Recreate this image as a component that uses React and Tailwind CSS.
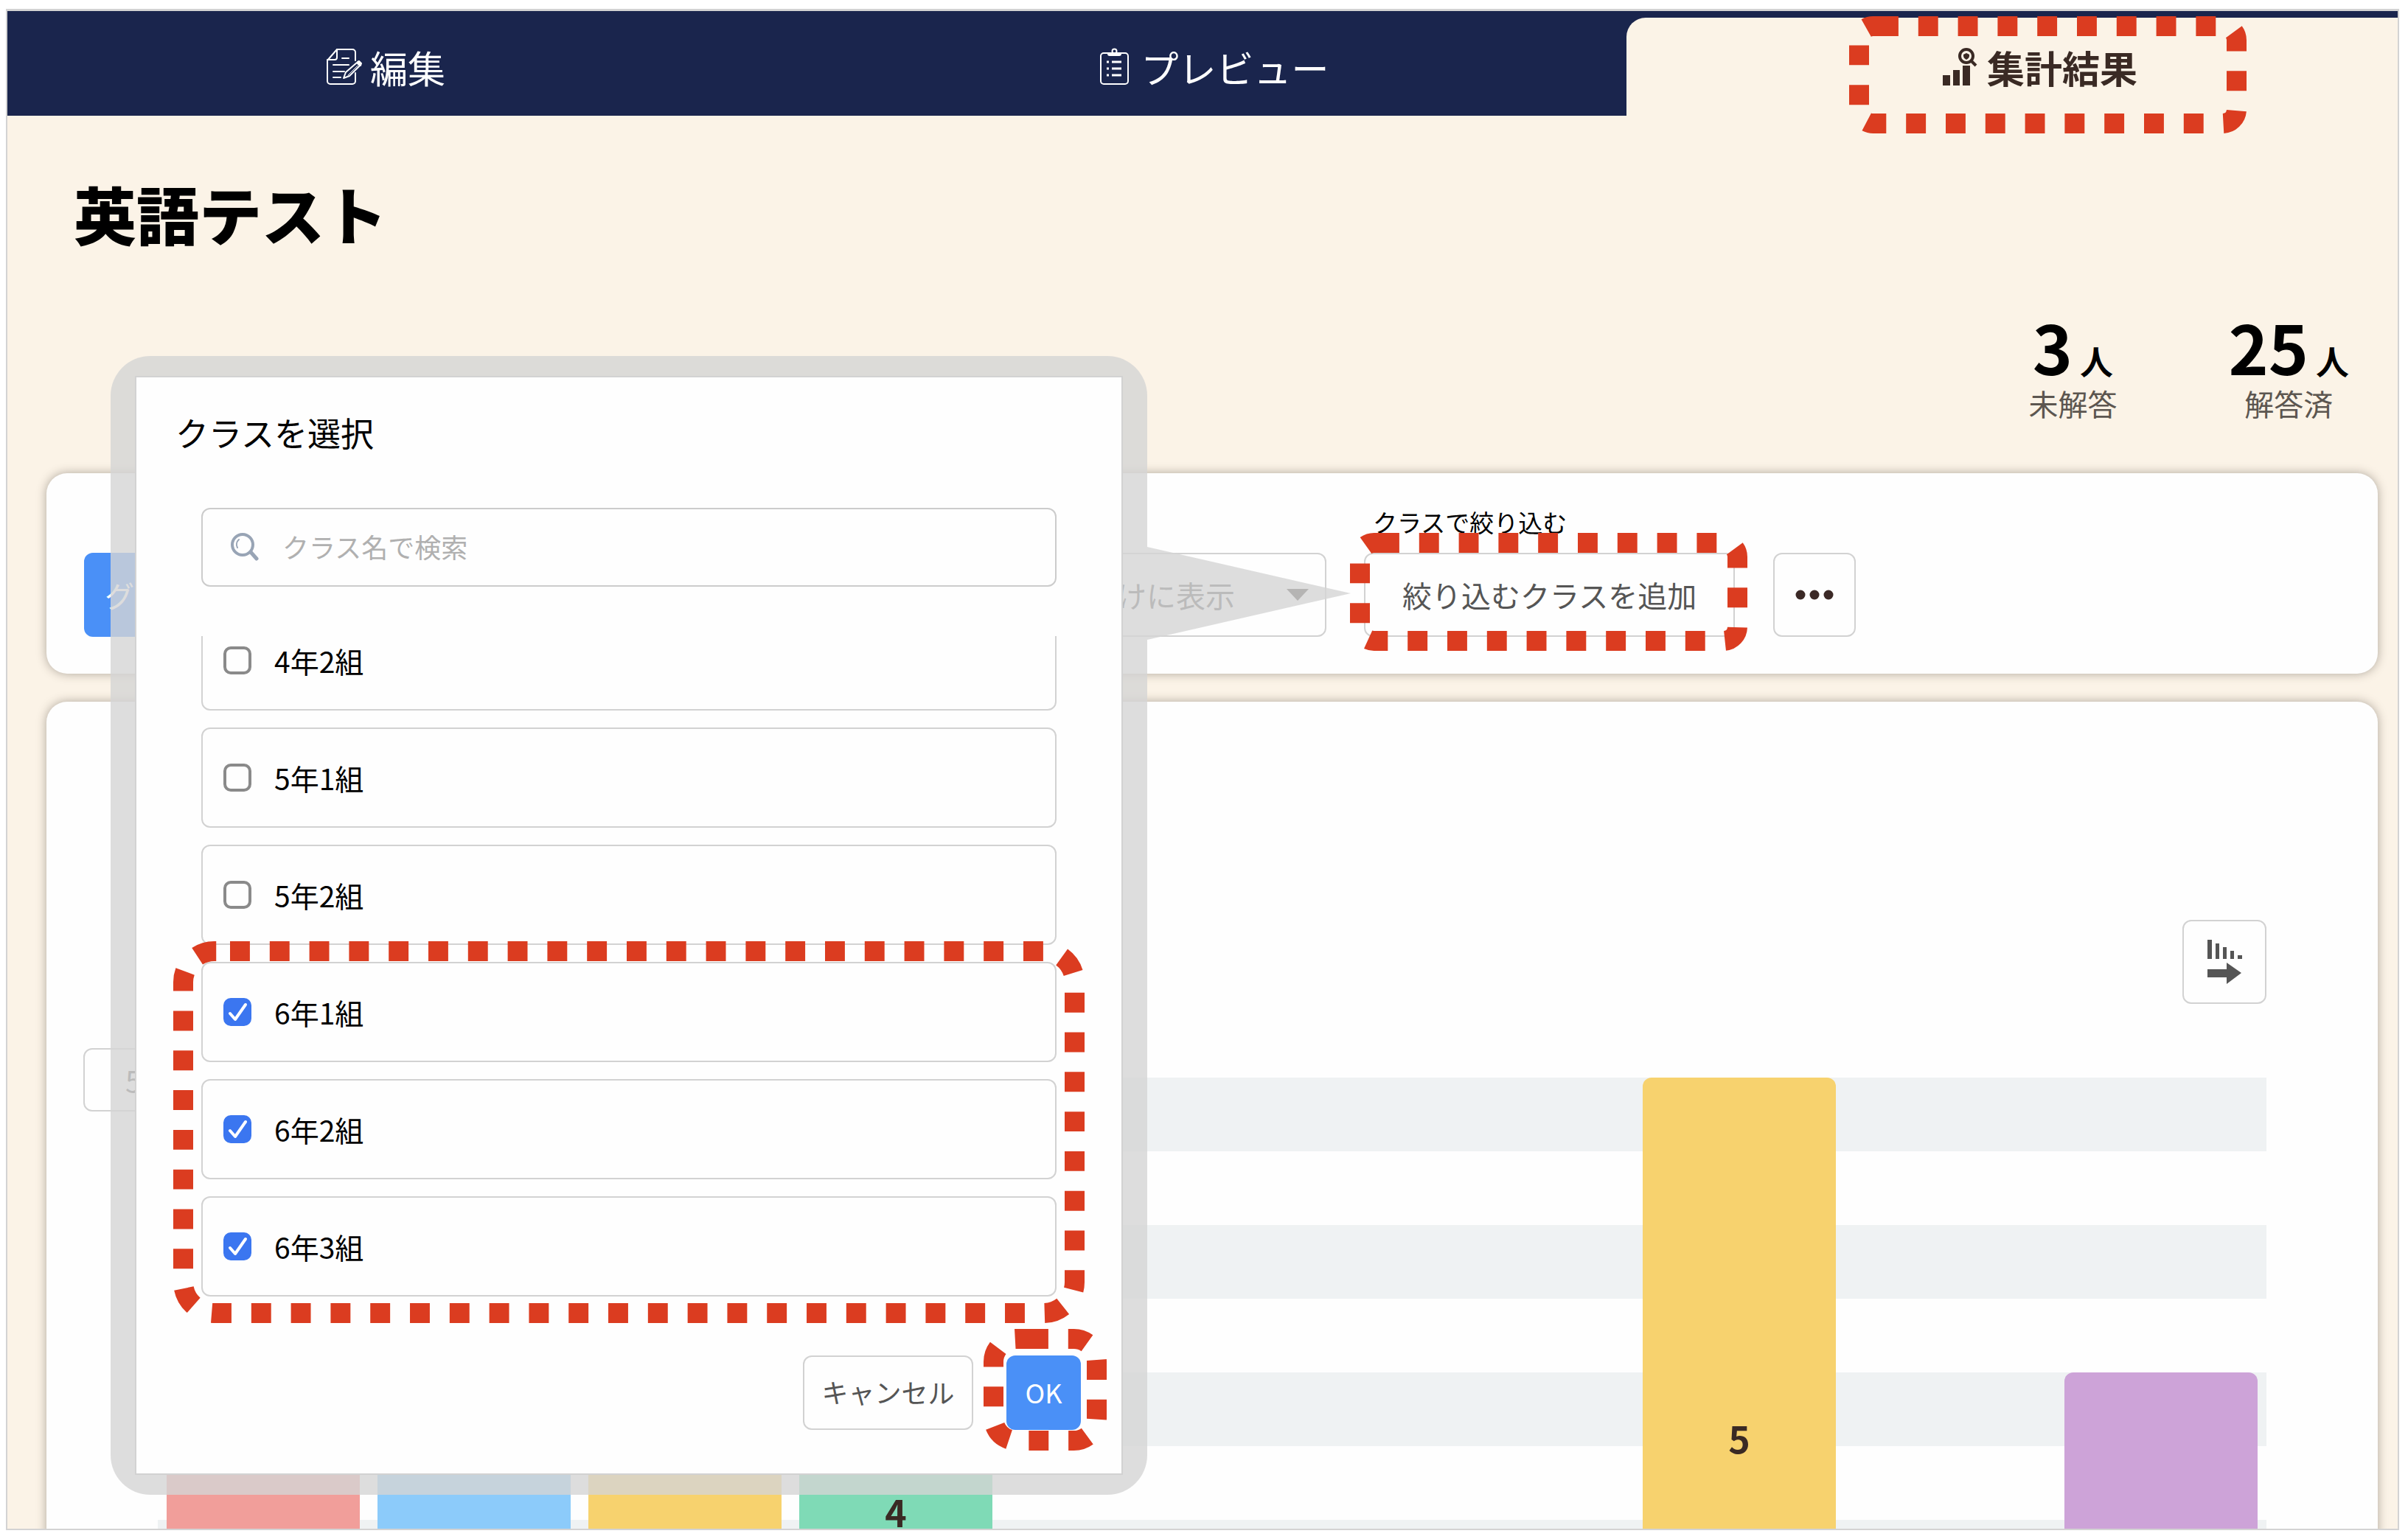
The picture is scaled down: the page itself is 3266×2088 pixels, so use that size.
import { useState } from 'react';

const TABS = [
  { id: 'edit', label: '編集', Icon: EditIcon },
  { id: 'preview', label: 'プレビュー', Icon: ClipboardIcon },
  { id: 'results', label: '集計結果', Icon: ResultsIcon },
];

const CLASSES = ['4年2組', '5年1組', '5年2組', '6年1組', '6年2組', '6年3組'];

const UNIT = 200;
const MIN_LABELLED = 4;
const BARS = [
  { value: 3, color: 'bg-[#f19e9a]' },
  { value: 3, color: 'bg-[#8ccbfa]' },
  { value: 3, color: 'bg-[#f7d26e]' },
  { value: 4, color: 'bg-[#7fdab6]' },
  { value: 0, color: 'bg-[#cda3d8]' },
  { value: 0, color: 'bg-[#f19e9a]' },
  { value: 0, color: 'bg-[#8ccbfa]' },
  { value: 5, color: 'bg-[#f7d26e]' },
  { value: 0, color: 'bg-[#7fdab6]' },
  { value: 3, color: 'bg-[#cda3d8]' },
];

function EditIcon() {
  return (
    <svg viewBox="0 0 49 51" className="w-[49px] h-[51px]" fill="none" stroke="currentColor" strokeWidth="2" strokeLinecap="round" strokeLinejoin="round">
      <path d="M40 17V6a4 4 0 0 0-4-4H15L2 17v28a4 4 0 0 0 4 4h30a4 4 0 0 0 4-4V34" />
      <path d="M15 2v11a3 3 0 0 1-3 3H2" />
      <path d="M22 14h9M10 23h21M10 32h15M10 40h10" />
      <path d="M24 41l3-8 15-13 4 4-14 14z" />
      <path d="M30 37l13-13" strokeWidth="1" />
      <path d="M43 19l2-1 3 3-1 3z" fill="currentColor" />
    </svg>
  );
}

function ClipboardIcon() {
  return (
    <svg viewBox="0 0 49 51" className="w-[49px] h-[51px]" fill="none" stroke="currentColor" strokeWidth="2">
      <rect x="6" y="7" width="37" height="42" rx="4" />
      <path d="M15 6h19v2a3 3 0 0 1-3 3H18a3 3 0 0 1-3-3z" fill="currentColor" stroke="none" />
      <circle cx="24.500" cy="4.500" r="3" />
      <path d="M14 19h3M14 28h3M14 37h3M21 19h13M21 28h13M21 37h13" strokeWidth="3" />
    </svg>
  );
}

function ResultsIcon() {
  return (
    <svg viewBox="0 0 49 51" className="w-[49px] h-[51px]" fill="currentColor">
      <path d="M0 37h10v14H0zM14 30h9v21h-9zM27 24h10v27H27z" />
      <circle cx="32" cy="11" r="9" fill="none" stroke="currentColor" strokeWidth="4" />
      <path d="M28 9l4-2 4 2v2c0 2-2 4-4 5-2-1-4-3-4-5z" />
      <path d="M38 17l7 7" stroke="currentColor" strokeWidth="4" />
    </svg>
  );
}

function SearchIcon() {
  return (
    <svg viewBox="0 0 38 38" className="w-[38px] h-[38px]" fill="none" stroke="currentColor" strokeLinecap="round">
      <circle cx="16" cy="16" r="14" strokeWidth="4" />
      <path d="M9 20a9 9 0 0 1 2-11" strokeWidth="2" />
      <path d="M27 26l8 9" strokeWidth="5" />
    </svg>
  );
}

function SortIcon() {
  return (
    <svg viewBox="0 0 47 60" className="w-[47px] h-[60px]" fill="currentColor">
      <path d="M0 0h6v26H0zM11 5h5v21h-5zM21 10h5v16h-5zM31 15h5v11h-5zM41 21h6v5h-6z" />
      <path d="M0 40h26V31l20 14-20 15V51H0z" />
    </svg>
  );
}

// Dashed marker drawn round a control. start = where the first dash begins on the top edge.
function Highlight({ width, height, radius, start, className }) {
  const m = 13.5;
  const r = radius;
  const R = width - m;
  const B = height - m;
  const d = `M${start} ${m}H${R - r}A${r} ${r} 0 0 1 ${R} ${m + r}V${B - r}A${r} ${r} 0 0 1 ${R - r} ${B}H${m + r}A${r} ${r} 0 0 1 ${m} ${B - r}V${m + r}A${r} ${r} 0 0 1 ${m + r} ${m}H${start}`;
  return (
    <svg width={width} height={height} aria-hidden="true" className={`absolute max-w-none pointer-events-none ${className}`}>
      <path d={d} fill="none" stroke="#db3c20" strokeWidth="27" strokeDasharray="26.9" />
    </svg>
  );
}

function Header() {
  return (
    <nav className="flex bg-[#1a254d] pt-[9px] -ml-[48px] -mr-[76px]">
      {TABS.map(({ id, label, Icon }) => (
        <button key={id} type="button"
          className={`flex-1 flex items-center justify-center h-[133px] text-[51px] leading-[66px] ${
            id === 'results' ? 'bg-[#fbf3e7] text-[#3a2a24] font-bold rounded-tl-[26px]' : 'text-white'
          }`}>
          <span className="relative flex items-center gap-[11px]">
            <Icon />
            {label}
            {id === 'results' && (
              <Highlight width={539} height={159} radius={19} start={40} className="-left-[127px] -top-9" />
            )}
          </span>
        </button>
      ))}
    </nav>
  );
}

function Stat({ count, label }) {
  return (
    <div className="flex flex-col items-center">
      <div className="flex items-baseline gap-2.5 text-black font-bold">
        <span className="text-[92px] leading-[100px]">{count}</span>
        <span className="text-[45px] leading-[45px]">人</span>
      </div>
      <div className="text-[40px] leading-[56px] text-[#5c5650]">{label}</div>
    </div>
  );
}

function Toolbar() {
  return (
    <section className="flex items-end pt-[43px] pb-[50px] px-[51px] bg-[#fefefe] rounded-[28px] shadow-[0_0_14px_rgba(60,50,40,0.4)]">
      <button type="button" className="h-[114px] px-7 rounded-xl bg-[#4a90f7] text-white text-[40px]">グラフ</button>
      <div className="relative ml-[1075px]">
        <select aria-label="表示名"
          className="appearance-none block h-[114px] w-[434px] pl-7 border-2 border-[#d2d2d2] rounded-xl bg-transparent text-[40px] text-[#555]">
          <option>先生だけに表示</option>
        </select>
        <svg viewBox="0 0 30 16" className="absolute right-6 top-[49px] w-[30px] h-4 pointer-events-none">
          <path d="M0 0h30L15 16z" fill="#3b3230" />
        </svg>
      </div>
      <div className="ml-[51px]">
        <div id="filter-label" className="ml-3 mb-[18px] text-[33px] leading-[47px] text-black">クラスで絞り込む</div>
        <div className="relative">
          <button type="button" aria-describedby="filter-label"
            className="block h-[114px] px-[50px] border-2 border-[#d2d2d2] rounded-xl text-[40px] text-[#555]">
            絞り込むクラスを追加
          </button>
          <Highlight width={539} height={160} radius={19} start={40} className="-left-[19px] -top-[27px]" />
        </div>
      </div>
      <button type="button" aria-label="その他" className="ml-[52px] w-28 h-[114px] flex items-center justify-center border-2 border-[#d2d2d2] rounded-xl">
        <svg viewBox="0 0 52 14" className="w-[52px] h-3.5" fill="#3b2926">
          <circle cx="7" cy="7" r="6.500" />
          <circle cx="26" cy="7" r="6.500" />
          <circle cx="45" cy="7" r="6.500" />
        </svg>
      </button>
    </section>
  );
}

function Chart() {
  return (
    <section className="mt-[38px] pt-[296px] px-[151px] bg-[#fefefe] rounded-[28px] shadow-[0_0_14px_rgba(60,50,40,0.4)]">
      <div className="flex justify-end">
        <button type="button" aria-label="並べ替え" className="w-[114px] h-[114px] flex items-center justify-center border-2 border-[#d2d2d2] rounded-xl text-[#555]">
          <SortIcon />
        </button>
      </div>
      <div className="relative mt-[100px] h-[1000px]">
        <div className="absolute inset-0">
          {[1, 2, 3, 4, 5].map(n => (
            <div key={n} className="h-[100px] mb-[100px] bg-[#eff2f3]" />
          ))}
        </div>
        <button type="button" className="absolute -left-[101px] -top-10 h-[86px] w-[136px] border-2 border-[#d2d2d2] rounded-xl text-[40px] text-[#555]">5</button>
        <div className="relative h-full grid grid-cols-10 items-end">
          {BARS.map((bar, i) => (
            <div key={i} style={{ height: bar.value * UNIT }}
              className={`mx-3 flex items-center justify-center pb-6 rounded-t-xl text-[50px] font-bold text-[#3a2a24] ${bar.color}`}>
              {bar.value >= MIN_LABELLED && bar.value}
            </div>
          ))}
        </div>
      </div>
    </section>
  );
}

function ClassRow({ name, checked, onToggle }) {
  return (
    <label className="shrink-0 flex items-center h-[136px] px-7 border-2 border-[#d2d2d2] rounded-xl text-[39px] text-black">
      <span className="relative mr-[31px] w-[38px] h-[38px]">
        <input type="checkbox" checked={checked} onChange={onToggle}
          className="appearance-none block w-[38px] h-[38px] rounded-[10px] border-4 border-[#8a8a8a] checked:border-[#3b76f0] checked:bg-[#3b76f0]" />
        {checked && (
          <svg viewBox="0 0 38 38" className="absolute inset-0 pointer-events-none" fill="none" stroke="white" strokeWidth="4" strokeLinecap="round" strokeLinejoin="round">
            <path d="M9 21l7 8L30 9" />
          </svg>
        )}
      </span>
      {name}
    </label>
  );
}

function ClassDialog() {
  const [selected, setSelected] = useState(['6年1組', '6年2組', '6年3組']);
  const [query, setQuery] = useState('');

  const toggle = (name) => {
    setSelected(s => (s.includes(name) ? s.filter(n => n !== name) : [...s, name]));
  };

  return (
    <div role="dialog" aria-labelledby="dialog-title"
      className="absolute left-[140px] top-[468px] w-[1406px] px-[33px] py-[27px] rounded-[54px] bg-[#d4d4d4]/80">
      <svg viewBox="0 0 276 126" className="absolute left-full top-[259px] w-[276px] h-[126px]">
        <path d="M0 0l276 63L0 126z" fill="#d4d4d4" fillOpacity="0.8" />
      </svg>
      <div className="pt-[42px] pb-[59px] bg-[#fefefe] border-2 border-[#d2d2d2]">
        <h2 id="dialog-title" className="pl-[53px] text-[45px] leading-[66px] text-black">クラスを選択</h2>
        <div className="relative mt-[69px] mx-[88px]">
          <span className="absolute left-10 top-[34px] text-[#98a4b5]"><SearchIcon /></span>
          <input type="text" aria-label="クラス名で検索" placeholder="クラス名で検索"
            value={query} onChange={e => setQuery(e.target.value)}
            className="block w-full h-[107px] pl-[108px] pr-8 pb-1 border-2 border-[#cccccc] rounded-xl text-[36px] placeholder:text-[#b0b0b0]" />
        </div>
        <div className="relative mt-[67px] mx-[88px]">
          <div className="flex flex-col justify-end gap-[23px] h-[896px] overflow-hidden">
            {CLASSES.filter(name => name.includes(query)).map(name => (
              <ClassRow key={name} name={name} checked={selected.includes(name)} onToggle={() => toggle(name)} />
            ))}
          </div>
          <Highlight width={1236} height={518} radius={42} start={77} className="-left-[38px] -bottom-9" />
        </div>
        <div className="mt-20 mr-[55px] flex justify-end gap-[45px] text-[36px]">
          <button type="button" className="w-[231px] h-[101px] pb-1 border-2 border-[#d2d2d2] rounded-xl text-[#555]">キャンセル</button>
          <div className="relative">
            <button type="button" className="block w-[101px] h-[101px] pb-1 rounded-xl bg-[#4a90f7] text-white">OK</button>
            <Highlight width={167} height={165} radius={31} start={61} className="-left-[31px] -top-9" />
          </div>
        </div>
      </div>
    </div>
  );
}

export default function App() {
  return (
    <div lang="ja" className="h-screen pt-3 pr-3 pb-3 pl-2 bg-white font-['Noto_Sans_CJK_JP',sans-serif]">
      <div className="relative h-full overflow-hidden border-2 border-t-3 border-[#d3d3d3] bg-[#fbf3e7]">
        <Header />
        <main className="pl-[53px] pr-[27px]">
          <h1 className="pt-[72px] px-[37px] text-[85px] leading-[120px] font-black text-black">英語テスト</h1>
          <div className="mt-[70px] mb-[67px] mr-[39px] flex justify-end gap-[151px]">
            <Stat count={3} label="未解答" />
            <Stat count={25} label="解答済" />
          </div>
          <Toolbar />
          <Chart />
        </main>
        <ClassDialog />
      </div>
    </div>
  );
}
